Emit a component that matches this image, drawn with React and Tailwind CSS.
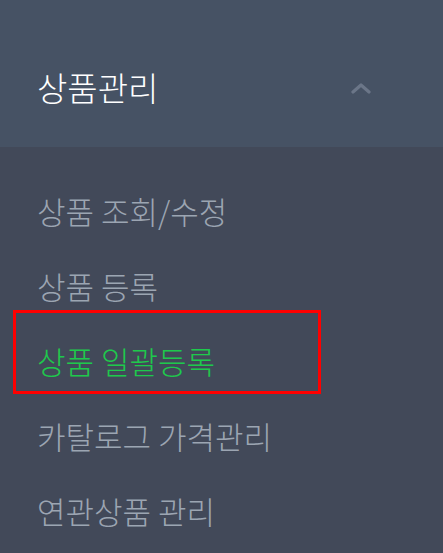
import React from "react";

const items = [
  { label: "상품 조회/수정" },
  { label: "상품 등록" },
  { label: "상품 일괄등록", active: true },
  { label: "카탈로그 가격관리" },
  { label: "연관상품 관리" },
];

function ChevronUp() {
  return (
    <svg width="20" height="12" viewBox="0 0 20 12" fill="none" aria-hidden="true">
      <path d="M2 10 L10 3 L18 10" stroke="#6b7688" strokeWidth="3.2" strokeLinecap="round" strokeLinejoin="round" />
    </svg>
  );
}

export default function App() {
  return (
    <div
      className="relative w-[443px] h-[553px] overflow-hidden bg-[#424959]"
      style={{ fontFamily: '"Noto Sans CJK KR", "Noto Sans", sans-serif' }}
    >
      {/* 메뉴 헤더 */}
      <div className="flex items-center justify-between h-[147px] bg-[#465264] pt-[28px] pl-[37px] pr-[72px]">
        <span className="text-[33px] leading-none font-light text-white">상품관리</span>
        <ChevronUp />
      </div>

      {/* 하위 메뉴 */}
      <ul className="flex flex-col pt-[26px]">
        {items.map((item) => (
          <li
            key={item.label}
            className={
              "flex items-center h-[75px] pl-[37px] text-[31px] leading-none font-light " +
              (item.active ? "text-[#1ec94c]" : "text-[#9ca5b2]")
            }
          >
            {item.label}
          </li>
        ))}
      </ul>

      {/* 강조 표시 박스 */}
      <div className="absolute left-[13px] top-[310px] w-[308px] h-[84px] border-[3px] border-[#ff0000]" />
    </div>
  );
}
